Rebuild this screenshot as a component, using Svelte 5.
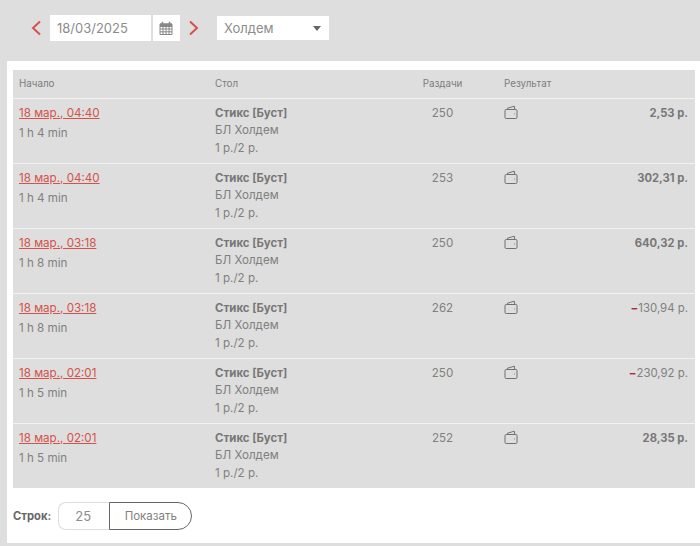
<script>
	const rows = [
		{ start: '18 мар., 04:40', time: '1 h 4 min', hands: 250, result: '2,53 р.' },
		{ start: '18 мар., 04:40', time: '1 h 4 min', hands: 253, result: '302,31 р.' },
		{ start: '18 мар., 03:18', time: '1 h 8 min', hands: 250, result: '640,32 р.' },
		{ start: '18 мар., 03:18', time: '1 h 8 min', hands: 262, result: '130,94 р.', loss: true },
		{ start: '18 мар., 02:01', time: '1 h 5 min', hands: 250, result: '230,92 р.', loss: true },
		{ start: '18 мар., 02:01', time: '1 h 5 min', hands: 252, result: '28,35 р.' },
	];
</script>

<div class="page">
	<div class="toolbar">
		<svg class="arrow" width="12" height="16" viewBox="0 0 12 16"><path d="M10 1.500 3 8l7 6.500" /></svg>
		<div class="date">18/03/2025</div>
		<div class="cal">
			<svg width="14" height="14" viewBox="0 0 14 14">
				<path d="M1 3h12v10.500H1z M1 5.500h12 M1 8h12 M1 10.800h12 M4 5.500v8 M7 5.500v8 M10 5.500v8" fill="none" stroke="#888" stroke-width="1" />
				<path d="M1 2.500h12v3H1z" fill="#888" />
				<path d="M3.500 .8v2.500 M10.500 .8v2.500" stroke="#888" stroke-width="1.500" />
			</svg>
		</div>
		<svg class="arrow next" width="12" height="16" viewBox="0 0 12 16"><path d="M2 1.500 9 8l-7 6.500" /></svg>
		<div class="select">
			<span>Холдем</span>
			<i class="caret"></i>
		</div>
	</div>

	<div class="panel">
		<table>
			<colgroup>
				<col class="c1" /><col class="c2" /><col class="c3" /><col class="c4" /><col />
			</colgroup>
			<thead>
				<tr>
					<th>Начало</th>
					<th>Стол</th>
					<th class="center">Раздачи</th>
					<th>Результат</th>
					<th></th>
				</tr>
			</thead>
			<tbody>
				{#each rows as row}
					<tr>
						<td>
							<a href="#top">{row.start}</a>
							<div class="time">{row.time}</div>
						</td>
						<td class="table-info">
							<b>Стикс [Буст]</b>
							<div>БЛ Холдем</div>
							<div>1 р./2 р.</div>
						</td>
						<td class="center">{row.hands}</td>
						<td>
							<svg class="wallet" width="14" height="15" viewBox="0 0 14 15">
								<path d="M3.500 4.500V3.200L10.300 1.200 10.800 4.500" />
								<rect x="1" y="4.500" width="12" height="9" rx="1.200" />
								<path d="M10 9h.8" />
							</svg>
						</td>
						<td class="amount" class:loss={row.loss}>
							{#if row.loss}<span class="minus">−</span>{/if}{row.result}
						</td>
					</tr>
				{/each}
			</tbody>
		</table>

		<div class="pager">
			<span class="label">Строк:</span>
			<div class="count">25</div>
			<button>Показать</button>
		</div>
	</div>
</div>

<style>
	:global(body) {
		background: #dedede;
	}
	.page {
		width: 700px;
		height: 546px;
		overflow: hidden;
		font-family: Inter, "Liberation Sans", sans-serif;
		font-size: 11.600px;
		color: #808080;
	}
	.toolbar {
		display: flex;
		align-items: center;
		height: 61px;
		padding: 0 0 5px 30px;
		box-sizing: border-box;
	}
	.arrow {
		fill: none;
		stroke: #d4524a;
		stroke-width: 2;
	}
	.date {
		width: 101px;
		height: 26px;
		margin-left: 8px;
		padding-left: 7px;
		box-sizing: border-box;
		background: #fff;
		font-size: 13px;
		line-height: 26px;
		color: #8c8c8c;
	}
	.cal {
		display: flex;
		align-items: center;
		justify-content: center;
		width: 27px;
		height: 26px;
		margin-left: 2px;
		padding-right: 2px;
		box-sizing: border-box;
		background: #fff;
	}
	.next {
		margin-left: 8px;
	}
	.select {
		display: flex;
		align-items: center;
		justify-content: space-between;
		width: 112px;
		height: 24px;
		margin-left: 17px;
		padding: 0 7px;
		box-sizing: border-box;
		background: #fff;
		font-size: 13px;
		color: #8c8c8c;
	}
	.caret {
		width: 0;
		height: 0;
		margin-right: 1px;
		border-left: 4.500px solid transparent;
		border-right: 4.500px solid transparent;
		border-top: 5px solid #666;
	}
	.panel {
		margin-left: 7px;
		height: 482px;
		padding: 9px 5px 0 6px;
		box-sizing: border-box;
		background: #fff;
	}
	table {
		width: 682px;
		border-collapse: collapse;
		table-layout: fixed;
		background: #dedede;
	}
	.c1 {
		width: 196px;
	}
	.c2 {
		width: 178px;
	}
	.c3 {
		width: 111px;
	}
	.c4 {
		width: 60px;
	}
	th {
		height: 28px;
		padding: 1px 6px 1px;
		font-size: 9.800px;
		font-weight: 400;
		text-align: left;
		color: #7c7c7c;
		box-sizing: border-box;
	}
	td {
		height: 65px;
		padding: 6px 6px 0;
		box-sizing: border-box;
		vertical-align: top;
		line-height: 17.500px;
		border-top: 1px solid #f2f2f2;
	}
	.center {
		text-align: center;
	}
	a {
		color: #d4524a;
		text-decoration: underline;
	}
	.time {
		margin-top: 3px;
	}
	.table-info b {
		font-weight: 700;
		color: #777;
		font-size: 11.400px;
	}
	.wallet {
		fill: none;
		stroke: #707070;
		stroke-width: 1;
		margin-top: 0;
		display: block;
	}
	td.amount {
		padding-right: 7px;
		text-align: right;
		font-weight: 700;
		font-size: 11.200px;
		color: #777;
		white-space: nowrap;
	}
	td.amount.loss {
		font-size: 11.400px;
		font-weight: 400;
		color: #808080;
	}
	.minus {
		color: #b3283c;
		font-weight: 700;
	}
	.pager {
		display: flex;
		align-items: center;
		height: 28px;
		margin-top: 14px;
	}
	.label {
		font-size: 11.200px;
		font-weight: 700;
		color: #666;
		margin-right: 7px;
	}
	.count {
		width: 51px;
		height: 28px;
		padding-right: 2px;
		box-sizing: border-box;
		border: 1px solid #ddd;
		border-right: 0;
		border-radius: 8px 0 0 8px;
		text-align: center;
		line-height: 26px;
		font-size: 13px;
		color: #8c8c8c;
	}
	button {
		width: 83px;
		height: 28px;
		padding: 0;
		background: #fff;
		border: 1px solid #666;
		border-radius: 0 14px 14px 0;
		font-family: inherit;
		font-size: 11.500px;
		color: #808080;
	}
</style>
